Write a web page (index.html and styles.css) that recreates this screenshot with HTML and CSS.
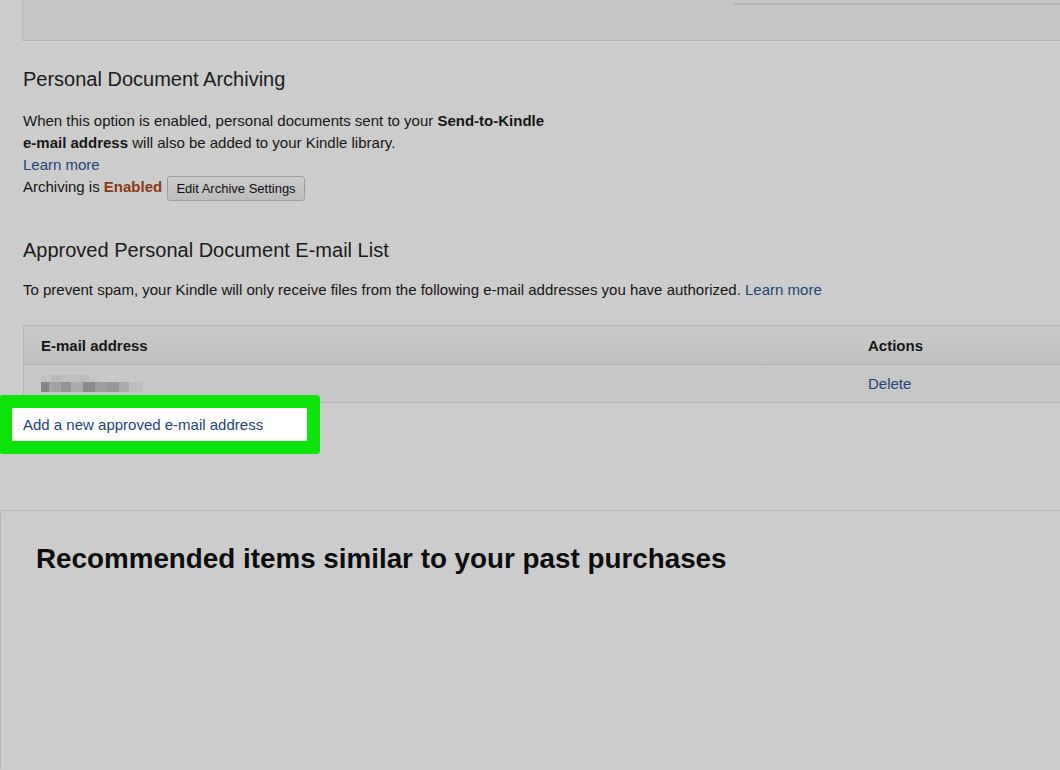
FILE: index.html
```html
<!DOCTYPE html>
<html>

<head>
  <meta charset="utf-8">
  <title>Personal Document Settings</title>
  <link rel="stylesheet" href="styles.css">
</head>

<body>

  <div class="top-panel">
    <div class="top-tab"></div>
  </div>

  <div class="content">
    <h2 class="section-title archive-title">Personal Document Archiving</h2>
    <p class="text">
      When this option is enabled, personal documents sent to your <b>Send-to-Kindle</b><br>
      <b>e-mail address</b> will also be added to your Kindle library.<br>
      <a href="#" class="link">Learn more</a><br>
      Archiving is <span class="enabled">Enabled</span>
      <button class="btn-archive">Edit Archive Settings</button>
    </p>

    <h2 class="section-title list-title">Approved Personal Document E-mail List</h2>
    <p class="text intro">
      To prevent spam, your Kindle will only receive files from the following e-mail addresses you have authorized.
      <a href="#" class="link">Learn more</a>
    </p>

    <div class="email-table">
      <div class="row head">
        <div class="cell address">E-mail address</div>
        <div class="cell actions">Actions</div>
      </div>
      <div class="row">
        <div class="cell address">
          <div class="blur">
            <div class="blur-line faint">
              <span style="width:10px;background:#c2c2c2"></span>
              <span style="width:12px;background:#bbbbbb"></span>
              <span style="width:16px;background:#c0c0c0"></span>
              <span style="width:10px;background:#bcbcbc"></span>
              <span style="width:12px;background:#c4c4c4"></span>
            </div>
            <div class="blur-line">
              <span style="width:8px;background:#858585"></span>
              <span style="width:12px;background:#a2a2a2"></span>
              <span style="width:10px;background:#939393"></span>
              <span style="width:12px;background:#ababab"></span>
              <span style="width:12px;background:#8b8b8b"></span>
              <span style="width:12px;background:#9e9e9e"></span>
              <span style="width:12px;background:#969696"></span>
              <span style="width:10px;background:#aaaaaa"></span>
              <span style="width:14px;background:#bdbdbd"></span>
            </div>
          </div>
        </div>
        <div class="cell actions"><a href="#" class="link">Delete</a></div>
      </div>
    </div>

    <div class="add-row">
      <a href="#" class="link">Add a new approved e-mail address</a>
    </div>
  </div>

  <div class="recommend">
    <h1 class="recommend-title">Recommended items similar to your past purchases</h1>
  </div>

</body>

</html>
```

FILE: styles.css
```css
body {
  margin: 0;
  background-color: #cccccc;
  color: #161616;
  font-family: "Liberation Sans", Arial, sans-serif;
  overflow: hidden;
}

/* Panel cut off at the top */
.top-panel {
  margin-left: 22px;
  height: 40px;
  background: #c5c5c5;
  border-left: 1px solid #b8b8b8;
  border-bottom: 1px solid #b3b3b3;
  box-shadow: 0 1px 0 #d3d3d3;
  display: flex;
  justify-content: flex-end;
}

.top-tab {
  width: 326px;
  height: 3px;
  border-bottom: 2px solid #b5b5b5;
  border-left: 1px solid #d0d0d0;
}

.content {
  padding-left: 23px;
}

.section-title {
  font-size: 20px;
  font-weight: normal;
  line-height: 24px;
  margin: 0;
  color: #1b1b1b;
}

.archive-title {
  margin-top: 26px;
}

.list-title {
  margin-top: 37px;
}

.text {
  font-size: 15px;
  line-height: 22px;
  margin: 19px 0 0;
}

.link {
  color: #1d4477;
  text-decoration: none;
}

.enabled {
  color: #8b3a10;
  font-weight: bold;
}

.btn-archive {
  font-family: "Liberation Sans", Arial, sans-serif;
  font-size: 13px;
  color: #111;
  height: 25px;
  padding: 0 8px;
  margin-left: 1px;
  background: linear-gradient(#cbcbcb, #bcbcbc);
  border: 1px solid #9c9c9c;
  border-radius: 3px;
  vertical-align: middle;
}

.intro {
  margin-top: 17px;
}

.email-table {
  margin-top: 24px;
  margin-right: -8px;
  border: 1px solid #b6b6b6;
  font-size: 15px;
}

.row {
  display: flex;
  align-items: center;
  height: 37px;
  background: #c7c7c7;
}

.row.head {
  height: 38px;
  background: linear-gradient(#c9c9c9, #c0c0c0);
  border-bottom: 1px solid #b2b2b2;
  font-weight: bold;
}

.cell.address {
  flex: 1;
  padding-left: 17px;
}

.cell.actions {
  width: 199px;
}

.blur {
  display: flex;
  flex-direction: column;
}

.blur-line {
  display: flex;
  height: 10px;
}

.blur-line.faint {
  height: 7px;
}

.blur-line span {
  display: block;
  height: 100%;
}

/* Highlighted link */
.add-row {
  margin-top: 5px;
  margin-left: -11px;
  width: 295px;
  height: 33px;
  display: flex;
  align-items: center;
  padding-left: 11px;
  box-sizing: border-box;
  font-size: 15px;
  background: #ffffff;
  box-shadow: 0 0 0 13px #0ce40c;
  border-radius: 1px;
}

.recommend {
  margin-top: 69px;
  height: 226px;
  border-top: 1px solid #b5b5b5;
  border-left: 1px solid #b5b5b5;
  border-top-left-radius: 4px;
  padding: 32px 0 0 35px;
}

.recommend-title {
  margin: 0;
  font-size: 27.8px;
  line-height: 32px;
  font-weight: bold;
  color: #0c0c0c;
}
```
